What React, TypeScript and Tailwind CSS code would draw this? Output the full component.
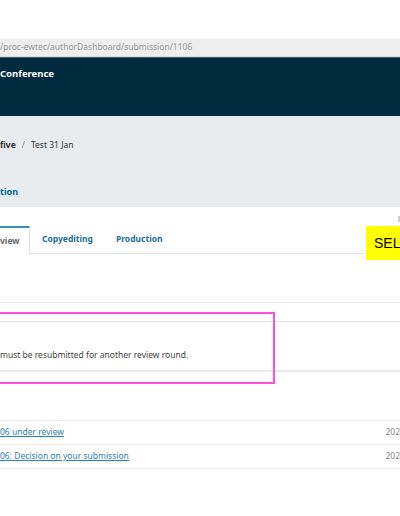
import React from "react";

export default function App() {
  const font = { fontFamily: '"Noto Sans", "Open Sans", sans-serif' };
  return (
    <div className="relative w-[400px] h-[516px] overflow-hidden bg-white" style={font}>
      <div className="h-[39px] bg-white" />
      <div className="h-[18px] bg-[#eeeeef] flex items-center text-[8.5px] text-[#9a9a9a] leading-none border-b border-[#dcdcdc]">
        /proc-ewtec/authorDashboard/submission/1106
      </div>
      <div className="h-[59px] bg-[#002b3f] border-t border-[#40596a] pt-[11px]">
        <div className="text-white font-bold text-[9.5px] leading-none">Conference</div>
      </div>
      <div className="h-[91px] bg-[#e9ecee] flex flex-col">
        <div className="mt-[25px] text-[8.5px] text-[#333] flex gap-[6px] items-center leading-none">
          <span className="font-bold">five</span>
          <span className="text-[#888]">/</span>
          <span>Test 31 Jan</span>
        </div>
        <div className="mt-[37px] text-[9px] font-bold text-[#006798] leading-none">tion</div>
      </div>
      <div className="h-[19px]" />
      <div className="flex h-[28px] border-b border-[#e4e4e4] w-[366px] text-[8.5px] font-bold leading-none">
        <div className="w-[30px] border-t-2 border-t-[#3a8fc0] border-r border-r-[#e0e0e0] bg-white flex items-center text-[#666] -mb-px">view</div>
        <div className="ml-[12px] flex items-center text-[#1a6f9e]">Copyediting</div>
        <div className="ml-[23px] flex items-center text-[#1a6f9e]">Production</div>
      </div>
      <div className="h-[48px]" />
      <div className="border-t border-[#ececec] h-[19px]" />
      <div className="border-t border-[#e4e4e4] h-[49px] flex items-end pb-[11px]">
        <span className="text-[8.5px] text-[#444] leading-none">must be resubmitted for another review round.</span>
      </div>
      <div className="border-t-2 border-[#e8e8e8] h-[50px]" />
      <div className="border-t border-[#ececec] h-[24px] flex items-center justify-between text-[8.5px] leading-none">
        <span className="text-[#2a7fb2] underline">06 under review</span>
        <span className="text-[#888]">202</span>
      </div>
      <div className="border-t border-[#ececec] h-[24px] flex items-center justify-between text-[8.5px] leading-none">
        <span className="text-[#2a7fb2] underline">06: Decision on your submission</span>
        <span className="text-[#888]">202</span>
      </div>
      <div className="border-t border-[#ececec]" />

      <div className="absolute left-[-10px] top-[312px] w-[285px] h-[72px] border-2 border-[#ff4fd8]" />
      <div className="absolute left-[366px] top-[226px] w-[40px] h-[34px] bg-[#ffff00] flex items-center pl-[8px] text-[14px] text-black" style={{ fontFamily: '"Liberation Sans", Arial, sans-serif' }}>
        SEL
      </div>
      <div className="absolute left-[398px] top-[216px] w-[2px] h-[6px] bg-[#cccccc]" />
    </div>
  );
}
